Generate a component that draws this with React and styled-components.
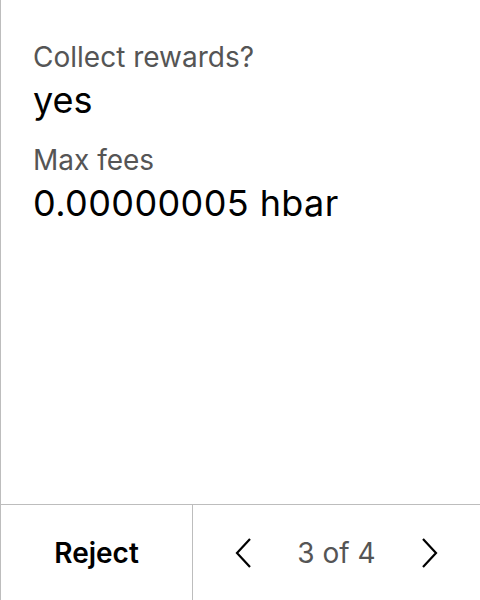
import React from "react";
import styled, { createGlobalStyle } from "styled-components";

const GlobalStyle = createGlobalStyle`
  html, body {
    margin: 0;
    padding: 0;
    background: #fff;
    font-family: Inter, "Noto Sans", sans-serif;
  }
`;

const Screen = styled.div`
  width: 480px;
  height: 600px;
  display: flex;
  flex-direction: column;
  border-left: 1px solid #bdbdbd;
  box-sizing: border-box;
  color: #000;
`;

const Body = styled.div`
  flex: 1;
  padding: 39px 32px 0;
`;

const Field = styled.div`
  margin-bottom: 17px;
`;

const Label = styled.div`
  font-size: 28px;
  line-height: 36px;
  color: #555;
`;

const Value = styled.div`
  font-size: 36px;
  line-height: 50px;
  letter-spacing: ${(p) => (p.$numeric ? "0.4px" : "0")};
  color: #000;
`;

const Footer = styled.div`
  height: 96px;
  box-sizing: border-box;
  display: flex;
  border-top: 1px solid #bdbdbd;
`;

const RejectButton = styled.button`
  width: 192px;
  border: none;
  border-right: 1px solid #bdbdbd;
  background: none;
  font-family: inherit;
  font-size: 28px;
  font-weight: 600;
  color: #000;
  padding: 0;
`;

const Pager = styled.div`
  flex: 1;
  display: flex;
  align-items: center;
  justify-content: space-between;
  padding: 0 42px;
`;

const Arrow = styled.button`
  border: none;
  background: none;
  padding: 0;
  display: flex;
`;

const Count = styled.span`
  font-size: 28px;
  color: #555;
`;

const Chevron = ({ dir }) => (
  <svg width="16" height="30" viewBox="0 0 16 30" fill="none">
    <path
      d={dir === "left" ? "M15 1 L2 15 L15 29" : "M1 1 L14 15 L1 29"}
      stroke="#000"
      strokeWidth="2.2"
    />
  </svg>
);

export default function App() {
  return (
    <>
      <GlobalStyle />
      <Screen>
        <Body>
          <Field>
            <Label>Collect rewards?</Label>
            <Value>yes</Value>
          </Field>
          <Field>
            <Label>Max fees</Label>
            <Value $numeric>0.00000005 hbar</Value>
          </Field>
        </Body>
        <Footer>
          <RejectButton>Reject</RejectButton>
          <Pager>
            <Arrow>
              <Chevron dir="left" />
            </Arrow>
            <Count>3 of 4</Count>
            <Arrow>
              <Chevron dir="right" />
            </Arrow>
          </Pager>
        </Footer>
      </Screen>
    </>
  );
}
